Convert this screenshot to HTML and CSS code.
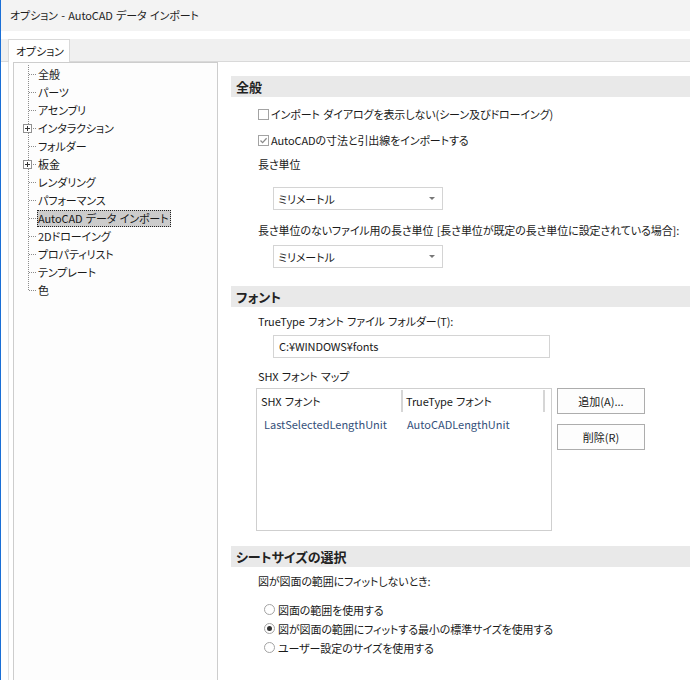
FILE: index.html
```html
<!DOCTYPE html>
<html lang="ja">
<head>
    <meta charset="UTF-8">
    <title>オプション - AutoCAD データ インポート</title>
    <link rel="stylesheet" href="styles.css">
</head>
<body>
    <div class="window">
        <div class="titlebar">オプション - AutoCAD データ インポート</div>
        <div class="tabstrip">
            <div class="tab">オプション</div>
        </div>
        <div class="pane">
            <ul class="tree">
                <li class="node"><span class="branch"></span><span class="label">全般</span></li>
                <li class="node"><span class="branch"></span><span class="label">パーツ</span></li>
                <li class="node"><span class="branch"></span><span class="label">アセンブリ</span></li>
                <li class="node"><span class="branch"><span class="expander"></span></span><span class="label">インタラクション</span></li>
                <li class="node"><span class="branch"></span><span class="label">フォルダー</span></li>
                <li class="node"><span class="branch"><span class="expander"></span></span><span class="label">板金</span></li>
                <li class="node"><span class="branch"></span><span class="label">レンダリング</span></li>
                <li class="node"><span class="branch"></span><span class="label">パフォーマンス</span></li>
                <li class="node"><span class="branch"></span><span class="label selected">AutoCAD データ インポート</span></li>
                <li class="node"><span class="branch"></span><span class="label">2Dドローイング</span></li>
                <li class="node"><span class="branch"></span><span class="label">プロパティリスト</span></li>
                <li class="node"><span class="branch"></span><span class="label">テンプレート</span></li>
                <li class="node last"><span class="branch"></span><span class="label">色</span></li>
            </ul>

            <div class="settings">
                <!-- 全般 -->
                <h2 class="group-title first">全般</h2>
                <label class="check row-cb1"><span class="box"></span>インポート ダイアログを表示しない(シーン及びドローイング)</label>
                <label class="check row-cb2"><span class="box checked">
                    <svg width="9" height="9" viewBox="0 0 9 9"><path d="M1.5 4.5 L3.6 6.6 L7.6 2.2" fill="none" stroke="#8a8a8a" stroke-width="1.3"/></svg>
                </span>AutoCADの寸法と引出線をインポートする</label>
                <div class="text row-unit">長さ単位</div>
                <div class="combo combo-1"><span>ミリメートル</span><span class="arrow"></span></div>
                <div class="text row-unit2">長さ単位のないファイル用の長さ単位 [長さ単位が既定の長さ単位に設定されている場合]:</div>
                <div class="combo combo-2"><span>ミリメートル</span><span class="arrow"></span></div>

                <!-- フォント -->
                <h2 class="group-title second">フォント</h2>
                <div class="text row-folder">TrueType フォント ファイル フォルダー(T):</div>
                <div class="field">C:¥WINDOWS¥fonts</div>
                <div class="text row-shx">SHX フォント マップ</div>
                <div class="map">
                    <div class="grid">
                        <div class="grid-head">
                            <div class="col col-shx">SHX フォント</div>
                            <div class="col col-tt">TrueType フォント</div>
                            <div class="col col-rest"></div>
                        </div>
                        <div class="grid-row">
                            <div class="cell cell-shx">LastSelectedLengthUnit</div>
                            <div class="cell cell-tt">AutoCADLengthUnit</div>
                        </div>
                    </div>
                    <div class="buttons">
                        <button class="btn">追加(A)...</button>
                        <button class="btn">削除(R)</button>
                    </div>
                </div>

                <!-- シートサイズの選択 -->
                <h2 class="group-title third">シートサイズの選択</h2>
                <div class="text row-fit">図が図面の範囲にフィットしないとき:</div>
                <div class="radios">
                    <label class="radio"><span class="dot"></span>図面の範囲を使用する</label>
                    <label class="radio"><span class="dot on"></span>図が図面の範囲にフィットする最小の標準サイズを使用する</label>
                    <label class="radio"><span class="dot"></span>ユーザー設定のサイズを使用する</label>
                </div>
            </div>
        </div>
    </div>
</body>
</html>
```

FILE: styles.css
```css
* {
    box-sizing: border-box;
}
body {
    margin: 0;
    padding: 0;
    background-color: #ffffff;
    font-family: "Noto Sans CJK JP", "Liberation Sans", sans-serif;
    font-size: 11px;
    letter-spacing: -0.1px;
    word-spacing: 1px;
    font-feature-settings: "palt";
    color: #1a1a1a;
    overflow: hidden;
}
.window {
    width: 690px;
    height: 680px;
    border-left: 1px solid #1a6fd6;
    overflow: hidden;
}
.titlebar {
    height: 31px;
    line-height: 31px;
    padding-left: 9px;
    background-color: #f3f3f3;
    color: #1f1f1f;
}
.tabstrip {
    margin-top: 8px;
    height: 23px;
    padding-left: 7px;
    background-color: #f0f0f0;
    border-bottom: 1px solid #d9d9d9;
    display: flex;
    align-items: flex-end;
}
.tab {
    height: 23px;
    margin-bottom: -1px;
    padding: 0 5px 0 7px;
    line-height: 22px;
    white-space: nowrap;
    background-color: #ffffff;
    border: 1px solid #d9d9d9;
    border-bottom: none;
}
.pane {
    display: flex;
    height: 620px;
    margin-left: 7px;
    padding-left: 4px;
    border-left: 1px solid #e3e3e3;
}

/* tree */
.tree {
    list-style: none;
    margin: 0;
    padding: 2px 0 0 14px;
    width: 205px;
    flex-shrink: 0;
    background-color: #fdfdfd;
    border: 1px solid #cdcdcd;
    border-bottom: none;
}
.node {
    display: flex;
    align-items: center;
    height: 18px;
}
.branch {
    position: relative;
    width: 9px;
    height: 18px;
    flex-shrink: 0;
    background-image:
        repeating-linear-gradient(to bottom, #8c8c8c 0 1px, transparent 1px 2px),
        repeating-linear-gradient(to right, #8c8c8c 0 1px, transparent 1px 2px);
    background-size: 1px 18px, 8px 1px;
    background-position: 0 0, 1px 9px;
    background-repeat: no-repeat;
}
.last .branch {
    background-size: 1px 10px, 8px 1px;
}
.expander {
    position: absolute;
    left: -5px;
    top: 5px;
    width: 9px;
    height: 9px;
    background: #ffffff;
    border: 1px solid #919191;
}
.expander::before,
.expander::after {
    content: "";
    position: absolute;
    background: #333;
}
.expander::before {
    left: 1px;
    top: 3px;
    width: 5px;
    height: 1px;
}
.expander::after {
    left: 3px;
    top: 1px;
    width: 1px;
    height: 5px;
}
.label {
    padding: 0 1px 0 0;
    line-height: 15px;
    white-space: nowrap;
    border: 1px solid transparent;
}
.label.selected {
    background-color: #cccccc;
    border: 1px dotted #222;
}

/* settings */
.settings {
    flex: 1;
    min-width: 0;
}
.group-title {
    margin: 0 0 0 13px;
    height: 21px;
    line-height: 21px;
    padding-left: 5px;
    font-size: 13px;
    font-weight: bold;
    letter-spacing: 0;
    color: #222;
    background-color: #e9e9e9;
}
.group-title.first { margin-top: 14px; }
.group-title.second { margin-top: 18px; }
.group-title.third { margin-top: 15px; }
.text {
    height: 20px;
    line-height: 20px;
    margin-left: 40px;
    white-space: nowrap;
}
.check {
    display: flex;
    align-items: center;
    height: 20px;
    margin-left: 40px;
    white-space: nowrap;
}
.box {
    width: 11px;
    height: 11px;
    margin-right: 2px;
    border: 1px solid #a3a3a3;
    background: #fff;
    display: flex;
    align-items: center;
    justify-content: center;
}
.row-cb1 { margin-top: 7px; }
.row-cb2 { margin-top: 6px; }
.row-unit { margin-top: 4px; }
.row-unit2 { margin-top: 10px; }
.row-folder { margin-top: 4px; }
.row-shx { margin-top: 8px; }
.row-fit { margin-top: 4px; }
.combo {
    display: flex;
    align-items: center;
    justify-content: space-between;
    width: 170px;
    height: 23px;
    margin-left: 55px;
    padding: 0 7px 0 4px;
    border: 1px solid #d4d4d4;
    background: #fff;
}
.combo-1 { margin-top: 13px; }
.combo-2 { margin-top: 5px; }
.arrow {
    width: 0;
    height: 0;
    border-left: 3px solid transparent;
    border-right: 3px solid transparent;
    border-top: 3px solid #777;
}
.field {
    width: 277px;
    height: 23px;
    line-height: 21px;
    margin: 4px 0 0 55px;
    padding-left: 5px;
    border: 1px solid #d4d4d4;
    background: #fff;
}
.map {
    display: flex;
    margin: 2px 0 0 38px;
}
.grid {
    width: 296px;
    height: 143px;
    padding: 1px;
    border: 1px solid #cfcfcf;
    background: #fff;
}
.grid-head {
    display: flex;
    height: 22px;
}
.col {
    line-height: 22px;
    padding-left: 3px;
    border-right: 2px solid #d6d6d6;
    white-space: nowrap;
}
.col-shx { width: 145px; }
.col-tt { width: 142px; }
.col-rest { width: 5px; border-right: none; }
.grid-row {
    display: flex;
    height: 22px;
    margin-top: 1px;
    color: #34507a;
    letter-spacing: 0;
}
.cell {
    line-height: 22px;
    white-space: nowrap;
}
.cell-shx { width: 145px; padding-left: 6px; }
.cell-tt { padding-left: 4px; }
.buttons {
    display: flex;
    flex-direction: column;
    gap: 10px;
    margin-left: 5px;
}
.btn {
    width: 88px;
    height: 26px;
    padding: 0;
    font-family: inherit;
    font-size: 11px;
    font-feature-settings: "palt";
    color: #1a1a1a;
    background: #fdfdfd;
    border: 1px solid #adadad;
}
.radios {
    margin: 9px 0 0 46px;
}
.radio {
    display: flex;
    align-items: center;
    height: 19px;
    white-space: nowrap;
}
.dot {
    width: 11px;
    height: 11px;
    margin-right: 3px;
    border: 1px solid #a3a3a3;
    border-radius: 50%;
    background: #fff;
    display: flex;
    align-items: center;
    justify-content: center;
}
.dot.on::after {
    content: "";
    width: 5px;
    height: 5px;
    border-radius: 50%;
    background: #333;
}
```
